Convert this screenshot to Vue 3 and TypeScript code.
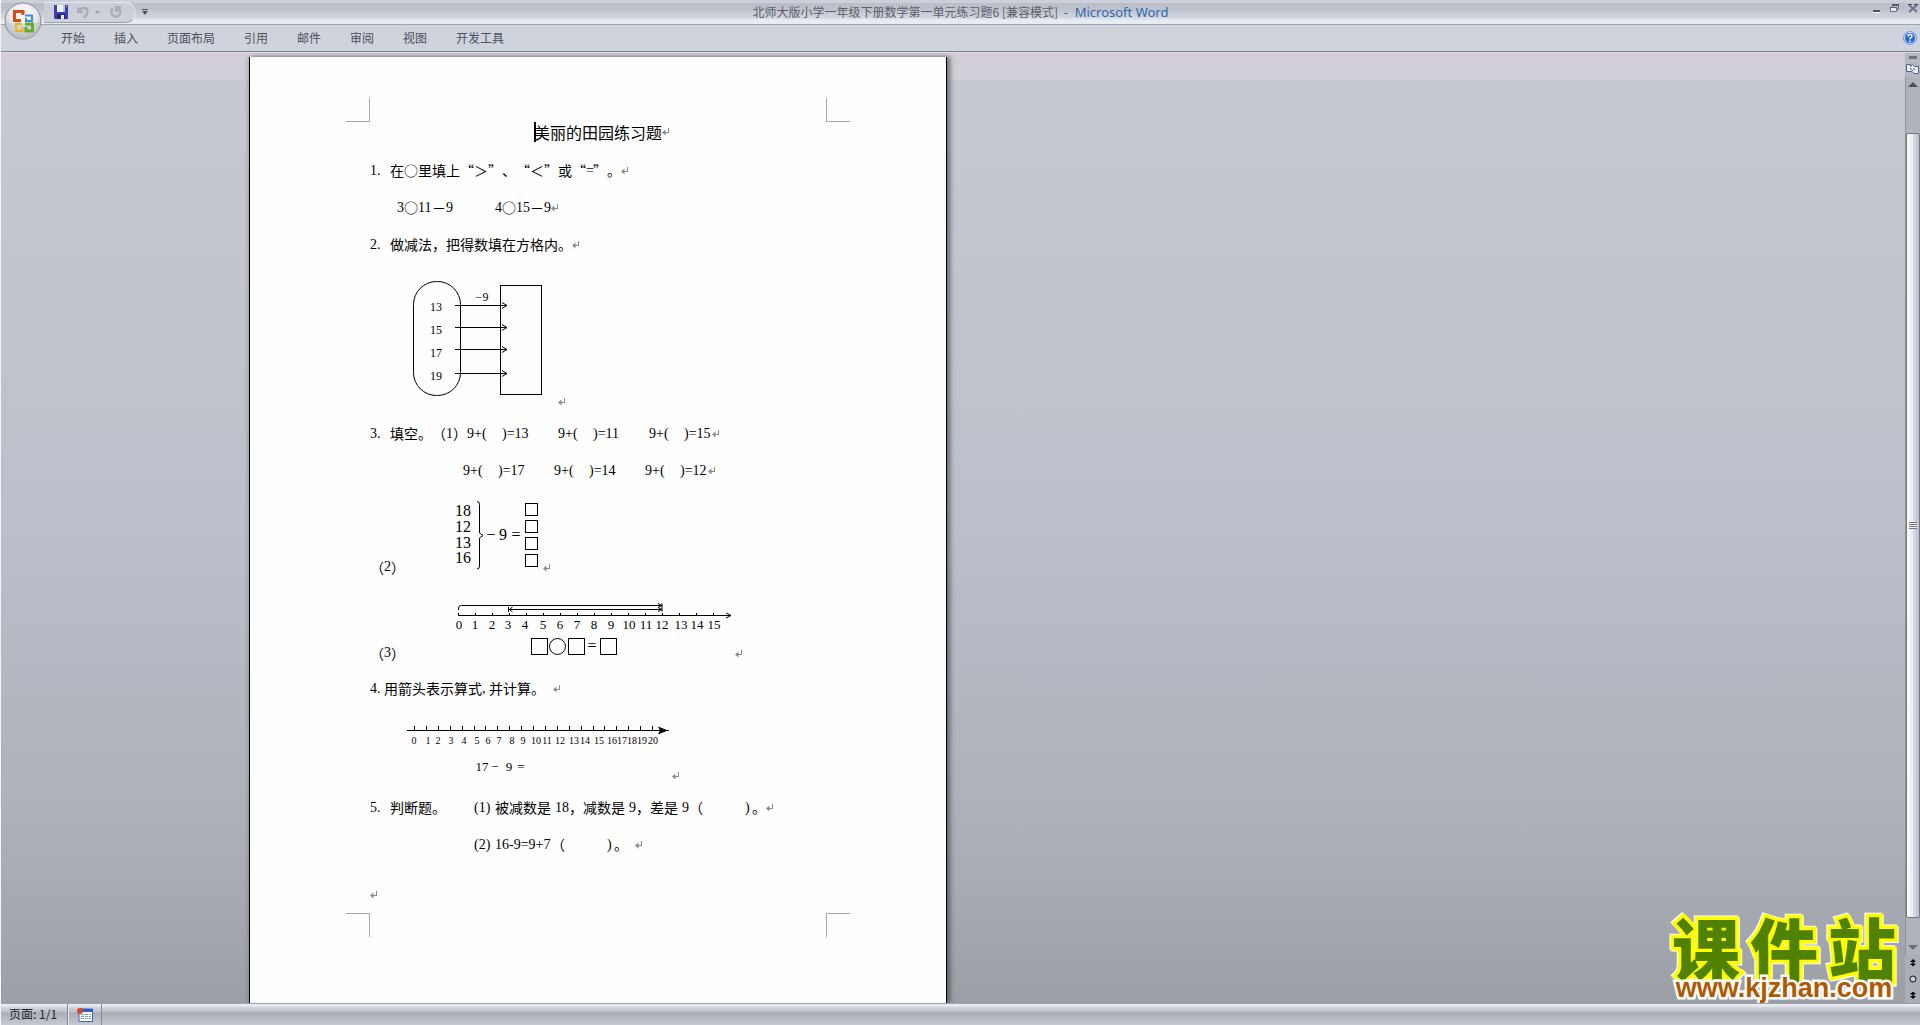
<script setup lang="ts">
import { defineComponent, h } from 'vue'

interface Cell {
  text?: string
  width: number
  latin?: boolean
}

const cjk = (text: string): Cell => ({ text, width: text.length * 14 })
const half = (text: string): Cell => ({ text, width: text.length * 7, latin: true })
const gap = (width: number): Cell => ({ width })
const blank = (result: string): Cell[] => [half('9+('), gap(14), half(')=' + result)]

const tabs = ['开始', '插入', '页面布局', '引用', '邮件', '审阅', '视图', '开发工具']

const compareLines: Cell[][] = [
  [half('1.'), gap(6), cjk('在○里填上“＞”、“＜”或“'), half('='), cjk('”。')],
  [gap(27), half('3'), cjk('○'), half('11'), cjk('－'), half('9'), gap(42), half('4'), cjk('○'), half('15'), cjk('－'), half('9')],
  [half('2.'), gap(6), cjk('做减法，把得数填在方格内。')],
]

const blankLines: Cell[][] = [
  [half('3.'), gap(6), cjk('填空。（'), half('1'), cjk('）'), ...blank('13'), gap(28), ...blank('11'), gap(28), ...blank('15')],
  [gap(93), ...blank('17'), gap(28), ...blank('14'), gap(28), ...blank('12')],
]

const arrowTitle: Cell[] = [half('4.'), cjk('用箭头表示算式'), half(','), cjk('并计算。'), gap(8)]

const judgeLines: Cell[][] = [
  [
    half('5.'), gap(6), cjk('判断题。'), gap(28), half('(1)'), cjk('被减数是'), gap(4), half('18'), cjk('，减数是'), gap(4),
    half('9'), cjk('，差是'), gap(4), half('9'), cjk('（'), gap(42), half(')'), cjk('。'),
  ],
  [gap(104), half('(2)'), half('16-9=9+7'), cjk('（'), gap(42), half(')'), cjk('。'), gap(7)],
]

const mapping = [
  { n: 13, line: 43, base: 49 },
  { n: 15, line: 65, base: 72 },
  { n: 17, line: 87, base: 95 },
  { n: 19, line: 111, base: 118 },
]
const minuends = [
  { n: 18, base: 19 },
  { n: 12, base: 35 },
  { n: 13, base: 51 },
  { n: 16, base: 66 },
]
const answerBoxes = [6, 23, 40, 57]
const shortAxis = [54, 70, 87, 103, 120, 138, 155, 172, 189, 206, 224, 241, 257, 276, 292, 309]
const longAxis = [44, 58, 68, 81, 94, 107, 118, 129, 142, 153, 166, 177, 190, 204, 215, 229, 242, 252, 262, 272, 283]

const ReturnMark = defineComponent(() => () =>
  h('svg', { width: 8, height: 8, viewBox: '0 0 8 8', 'aria-hidden': 'true', style: 'flex:none' }, [
    h('path', { d: 'M6.5 0v4.5H1', fill: 'none', stroke: '#8a8a8a', 'shape-rendering': 'crispEdges' }),
    h('path', { d: 'M0 4.5L3.5 1.5v6z', fill: '#8a8a8a' }),
  ]),
)

const TextLine = defineComponent({
  props: { cells: { type: Array as () => Cell[], required: true } },
  setup(props) {
    return () =>
      h('p', { class: 'line' }, [
        ...props.cells.map((c) =>
          h('span', { class: c.latin ? 'latin' : 'cell', style: { width: c.width + 'px' } }, c.text),
        ),
        h(ReturnMark),
      ])
  },
})
</script>

<template>
  <div class="app">
    <header class="titlebar">
      <div class="quick">
        <button class="tool" aria-label="保存">
          <svg width="14" height="14" viewBox="0 0 14 14">
            <path d="M0 0h14v14H1L0 13z" fill="#3b3fb0" />
            <path d="M3 0h8v7H3z" fill="#eef2fb" />
            <path d="M9 0h2v7H9z" fill="#b9c6e6" />
            <path d="M3 9h8v5H3z" fill="#23276e" />
            <path d="M7 10h3v4H7z" fill="#e8ecf6" />
            <path d="M12 1h1v1h-1z" fill="#c9d1f5" />
          </svg>
        </button>
        <button class="tool undo" aria-label="撤消">
          <svg width="13" height="14" viewBox="0 0 13 14">
            <path d="M2.500 5.500C5 2 10.500 2 10.500 6.500c0 3-2 4.500-3.500 6" fill="none" stroke="#a9adb9" stroke-width="2.500" />
            <path d="M0 1v7h7z" fill="#a9adb9" />
          </svg>
        </button>
        <svg class="drop" width="5" height="3" viewBox="0 0 5 3"><path d="M0 0h5L2.500 3z" fill="#9a9eaa" /></svg>
        <button class="tool redo" aria-label="重复">
          <svg width="13" height="14" viewBox="0 0 13 14">
            <path d="M4 3.500a4.500 4.500 0 1 0 5.500 0" fill="none" stroke="#a9adb9" stroke-width="2.500" />
            <path d="M6 1h6v2H9v4H6z" fill="#a9adb9" />
          </svg>
        </button>
      </div>
      <button class="more" aria-label="自定义快速访问工具栏">
        <svg width="6" height="6" viewBox="0 0 6 6"><path d="M0 0h6v1H0zM0 2h6L3 6z" fill="#4c505a" /></svg>
      </button>
      <h1 class="caption">北师大版小学一年级下册数学第一单元练习题6 [兼容模式] <span class="brand">-&nbsp; Microsoft Word</span></h1>
      <div class="window">
        <button aria-label="最小化">
          <svg width="10" height="10" viewBox="0 0 10 10"><path d="M1 6h7v2H1z" fill="#4a4d57" /><path d="M1 8h7v1H1z" fill="#fff" /></svg>
        </button>
        <button aria-label="还原">
          <svg width="10" height="10" viewBox="0 0 10 10">
            <path d="M2.500 5V1.500h6v4H7" fill="none" stroke="#6c7180" />
            <path d="M2 0h7v2H2zM0 3h7v2H0z" fill="#5a5e6a" />
            <path d="M.5 4v3.500h6V4" fill="#e6e9f0" stroke="#6c7180" />
          </svg>
        </button>
        <button aria-label="关闭">
          <svg width="10" height="10" viewBox="0 0 10 10"><path d="M1 1l8 7M9 1L1 8" stroke="#6c7488" stroke-width="2" /><path d="M0 0h4v1H0zM6 0h4v1H6z" fill="#4a4d57" /></svg>
        </button>
      </div>
    </header>

    <button class="office" aria-label="Office 按钮">
      <svg width="38" height="38" viewBox="0 0 38 38">
        <defs>
          <radialGradient id="orb" cx="50%" cy="30%" r="70%">
            <stop offset="0" stop-color="#fff" />
            <stop offset=".6" stop-color="#e4e5ea" />
            <stop offset="1" stop-color="#a2a5ad" />
          </radialGradient>
        </defs>
        <circle cx="19" cy="19" r="18" fill="url(#orb)" stroke="#888c95" />
        <path d="M2 20a17 17 0 0 0 34 0c-8 3-26 3-34 0z" fill="#c6c8cf" opacity=".6" />
        <g fill="none" stroke-width="3">
          <path d="M17 18.500H10.500V9.500H19V13" stroke="#dd4b12" />
          <path d="M21 13.500h7V19h-6v-3" stroke="#3b8ede" stroke-width="2" />
          <path d="M18 22h-6v7h6.500V25" stroke="#f4b312" stroke-width="2" />
          <path d="M21 22h7.500v7H22V25" stroke="#5fae2e" />
        </g>
      </svg>
    </button>

    <nav class="ribbon">
      <button v-for="t in tabs" :key="t" class="tab">{{ t }}</button>
      <button class="help" aria-label="帮助">
        <svg width="14" height="14" viewBox="0 0 14 14">
          <circle cx="7" cy="7" r="6.500" fill="#2465d8" stroke="#7ba4e4" />
          <circle cx="7" cy="7" r="5.500" fill="none" stroke="#dbe8fc" />
          <path d="M5 5.500C5 3 9 3 9 5.300 9 6.500 7 6.500 7 8.200M7 9.500v1.500" fill="none" stroke="#fff" stroke-width="1.500" />
        </svg>
      </button>
    </nav>

    <main class="work">
      <article class="page">
        <i class="crop tl"></i><i class="crop tr"></i><i class="crop bl"></i><i class="crop br"></i>

        <h2 class="heading"><span class="caret"></span>美丽的田园练习题<ReturnMark /></h2>

        <TextLine v-for="(c, i) in compareLines" :key="'c' + i" :cells="c" />

        <div class="figure map">
          <svg width="188" height="144" viewBox="0 0 188 144">
            <rect class="ink" x="43.500" y="19.500" width="47" height="114" rx="23" />
            <rect class="ink" x="130.500" y="23.500" width="41" height="109" />
            <text x="112" y="39" class="t12">−9</text>
            <g v-for="m in mapping" :key="m.n">
              <text x="66" :y="m.base" class="t12">{{ m.n }}</text>
              <path class="ink" :d="`M85 ${m.line + 0.5}h52m-5 -3l5 3l-5 3`" />
            </g>
          </svg>
          <ReturnMark />
        </div>

        <TextLine v-for="(c, i) in blankLines" :key="'b' + i" :cells="c" />

        <div class="figure brace">
          <span class="label"><span class="cell">（</span><span class="latin">2</span><span class="cell">）</span></span>
          <svg width="138" height="77" viewBox="0 0 138 77">
            <text v-for="m in minuends" :key="m.n" x="58" :y="m.base" class="t16">{{ m.n }}</text>
            <path class="ink" d="M72 4.500q2.500 0 2.500 3V36l3.500 2.500l-3.500 2.500V69q0 3-2.500 3" />
            <text x="86" y="43" class="t16">−</text>
            <text x="98" y="43" class="t16">9</text>
            <text x="111" y="43" class="t16">=</text>
            <rect v-for="y in answerBoxes" :key="y" class="ink" x="120.500" :y="y + 0.5" width="12" height="12" />
          </svg>
          <ReturnMark class="raised" />
        </div>

        <div class="figure jump">
          <span class="label"><span class="cell">（</span><span class="latin">3</span><span class="cell">）</span></span>
          <svg width="330" height="62" viewBox="0 0 330 62">
            <path class="ink" d="M53.500 12v-2q0-2.500 3-2.500H257m0-2v8m-4-8l4 2l-4 2" />
            <path class="ink" d="M103.500 9v5m4-5l-3 2.500l3 2.500M104 11.500h153m-4-2l4 2l-4 2" />
            <path class="ink" d="M53 17.500h273m-5-2.500l5 2.500l-5 2.500" />
            <g v-for="(x, i) in shortAxis" :key="i">
              <path class="ink" :d="`M${53.5 + i * 17} 15v3`" />
              <text :x="x" y="31" class="t13">{{ i }}</text>
            </g>
            <rect class="ink" x="126.500" y="40.500" width="16" height="16" />
            <circle class="ink" cx="152.500" cy="48.500" r="8" />
            <rect class="ink" x="163.500" y="40.500" width="16" height="16" />
            <text x="187" y="53" class="t16">=</text>
            <rect class="ink" x="195.500" y="40.500" width="16" height="16" />
          </svg>
          <ReturnMark class="raised" />
        </div>

        <TextLine :cells="arrowTitle" />

        <div class="figure axis">
          <svg width="302" height="65" viewBox="0 0 302 65">
            <path class="ink" d="M37 15.500h262" />
            <path d="M288 11.500l10 4l-10 4l2-4z" />
            <g v-for="(x, i) in longAxis" :key="i">
              <path class="ink" :d="`M${Math.round(i * 11.9) + 44.5} 11v4`" />
              <text :x="x" y="29" class="t10">{{ i }}</text>
            </g>
            <text x="112" y="56" class="t13">17</text>
            <text x="125" y="56" class="t13">−</text>
            <text x="139" y="56" class="t13">9</text>
            <text x="151" y="56" class="t13">=</text>
          </svg>
          <ReturnMark />
        </div>

        <TextLine v-for="(c, i) in judgeLines" :key="'j' + i" :cells="c" />
        <p class="tail"><ReturnMark /></p>
      </article>

      <a class="site" href="#">
        <span class="name"><span>课</span><span>件</span><span>站</span></span>
        <span class="url">www.kjzhan.com</span>
      </a>

      <aside class="scroll">
        <i class="split"></i>
        <button class="ruler" aria-label="标尺">
          <svg width="13" height="12" viewBox="0 0 13 12"><path d="M.5 1.500h4v2l2-2 2 2h4v7H8l-2-2H.5z" fill="#e8edf6" stroke="#4d6288" /><path d="M4 5l3 3M7 6h2" stroke="#4d6288" /></svg>
        </button>
        <div class="track">
          <button class="arrow" aria-label="向上滚动"><svg width="10" height="5" viewBox="0 0 10 5"><path d="M5 0l5 5H0z" fill="#4c5056" /></svg></button>
          <div class="thumb"><i class="grip"></i></div>
          <button class="arrow" aria-label="向下滚动"><svg width="10" height="5" viewBox="0 0 10 5"><path d="M0 0h10L5 5z" fill="#66707c" /></svg></button>
        </div>
        <div class="browse">
          <button aria-label="前一页"><svg width="6" height="7" viewBox="0 0 6 7"><path d="M3 0l3 3H0zM3 3l3 3H4v1H2V6H0z" /></svg></button>
          <button aria-label="选择浏览对象"><svg width="8" height="8" viewBox="0 0 8 8"><circle cx="4" cy="4" r="3" fill="#c9ccd0" stroke="#111" /></svg></button>
          <button aria-label="下一页"><svg width="6" height="7" viewBox="0 0 6 7"><path d="M3 7l3-3H0zM3 4l3-3H4V0H2v1H0z" /></svg></button>
        </div>
      </aside>
    </main>

    <footer class="status">
      <span class="pages">页面: 1/1</span>
      <button class="macro" aria-label="宏">
        <svg width="16" height="14" viewBox="0 0 16 14">
          <path d="M2 1h13.500v12.500H2z" fill="#fff" stroke="#3c66b4" />
          <path d="M2 1h14v3H2z" fill="#2c5fc4" />
          <path d="M4 6h3v1H4zM8 6h3v1H8zM12 6h2v1h-2zM4 8h3v1H4zM8 8h3v1H8zM12 8h2v1h-2zM4 10h3v1H4zM8 10h3v1H8zM12 10h2v1h-2z" fill="#7f9fd6" />
          <circle cx="3" cy="3" r="3" fill="#d4472a" />
        </svg>
      </button>
    </footer>
  </div>
</template>

<style>
body {
  margin: 0;
}
</style>

<style scoped>
.app {
  position: relative;
  display: flex;
  flex-direction: column;
  height: 100vh;
  box-sizing: border-box;
  border-left: 1px solid #f4f4f8;
  overflow: hidden;
  font-family: 'Noto Sans CJK SC', sans-serif;
  font-size: 12px;
  color: #3f444e;
  text-spacing-trim: space-all;
}
button {
  display: flex;
  align-items: center;
  justify-content: center;
  padding: 0;
  border: 0;
  background: none;
  font: inherit;
  color: inherit;
}
.titlebar {
  display: grid;
  grid-template-columns: 135px 1fr auto 1fr 135px;
  align-items: center;
  flex: none;
  height: 24px;
  border-bottom: 1px solid #9fa3ad;
  background: linear-gradient(#cbcfd8 0 3px, #bbbfc9 3px 6px, #bec2cb 9px, #d0d4dc 17px, #dde1e9 19px, #e7ebf2 20px);
}
.quick {
  display: flex;
  align-items: center;
  box-sizing: border-box;
  width: 92px;
  height: 21px;
  margin-left: 43px;
  padding-left: 10px;
  border: 1px solid #e4e7ee;
  border-left: 0;
  border-bottom-color: #9b9faa;
  border-radius: 0 11px 11px 0;
  background: linear-gradient(#c9cdd6, #ced2db);
}
.undo {
  margin-left: 9px;
}
.drop {
  margin-left: 5px;
}
.redo {
  margin-left: 9px;
}
.more {
  justify-self: start;
  margin-left: 6px;
}
.caption {
  margin: 0;
  font-size: 12px;
  line-height: 20px;
  font-weight: 400;
  color: #5c606a;
  white-space: nowrap;
}
.brand {
  margin-left: 3px;
  font-family: 'Noto Sans', sans-serif;
  font-size: 13px;
  color: #2f68ae;
}
.window {
  grid-column: 5;
  display: flex;
  justify-content: flex-end;
  gap: 8px;
  padding-right: 2px;
  padding-bottom: 7px;
}
.office {
  position: absolute;
  left: 3px;
  top: 2px;
  z-index: 2;
}
.ribbon {
  display: flex;
  align-items: center;
  gap: 29px;
  flex: none;
  height: 26px;
  padding: 0 3px 0 60px;
  border-bottom: 1px solid #7e828b;
  background: #cfd3dc;
  color: #4c515c;
}
.tab {
  line-height: 18px;
}
.help {
  margin-left: auto;
}
.work {
  position: relative;
  display: flex;
  flex: 1;
  min-height: 0;
  overflow: hidden;
  border-top: 1px solid #dcdde3;
  background: linear-gradient(#d1ced8 0 27px, #c7c9d2 27px, #c0c4cd 30%, #bbbfc9 50%, #adb1ba 80%, #a4a7af 92%, #9a9fa6);
}
.page {
  position: relative;
  flex: none;
  box-sizing: border-box;
  width: 698px;
  margin: 4px 0 0 248px;
  padding: 65px 120px 0;
  border: solid #000;
  border-width: 0 1px;
  background: #fefefe;
  box-shadow: 3px 0 5px rgba(40, 44, 52, 0.6), -2px 0 3px rgba(80, 84, 92, 0.2);
  color: #000;
}
.crop {
  position: absolute;
  width: 23px;
  height: 23px;
  border: 0 solid #a5a8ae;
}
.tl {
  left: 96px;
  top: 41px;
  border-width: 0 1px 1px 0;
}
.tr {
  right: 96px;
  top: 41px;
  border-width: 0 0 1px 1px;
}
.bl {
  left: 96px;
  bottom: 66px;
  border-width: 1px 1px 0 0;
}
.br {
  right: 96px;
  bottom: 66px;
  border-width: 1px 0 0 1px;
}
.heading {
  display: flex;
  align-items: center;
  justify-content: center;
  height: 20px;
  margin: 0 0 10px;
  font-size: 16px;
  font-weight: 400;
  line-height: 20px;
}
.heading svg {
  margin-right: -8px;
}
.caret {
  width: 2px;
  height: 20px;
  margin-right: -2px;
  background: #000;
}
.page :deep(.line) {
  display: flex;
  align-items: center;
  height: 37px;
  margin: 0;
  font-size: 14px;
  font-weight: 400;
  line-height: 18px;
  white-space: nowrap;
}
.page :deep(.cell) {
  flex: none;
}
.page :deep(.line .cell) {
  padding-bottom: 2px;
}
.page :deep(.latin) {
  flex: none;
  font-family: 'Liberation Serif', serif;
}
.figure {
  display: flex;
  align-items: flex-end;
  box-sizing: border-box;
}
.raised {
  margin-bottom: 2px;
}
.map {
  height: 152px;
  padding-bottom: 9px;
}
.brace {
  height: 91px;
  padding-bottom: 6px;
}
.jump {
  height: 90px;
  padding-bottom: 10px;
}
.axis {
  height: 82px;
  padding-bottom: 9px;
}
.label {
  display: flex;
  flex: none;
  width: 35px;
  font-size: 14px;
  line-height: 14px;
}
.ink {
  fill: none;
  stroke: #000;
}
text {
  font-family: 'Liberation Serif', serif;
  text-anchor: middle;
}
.t10 {
  font-size: 10px;
}
.t12 {
  font-size: 12px;
}
.t13 {
  font-size: 13px;
}
.t16 {
  font-size: 16px;
}
.tail {
  display: flex;
  align-items: center;
  height: 64px;
  margin: 0;
}
.site {
  position: absolute;
  right: 24px;
  bottom: 4px;
  display: flex;
  flex-direction: column;
  align-items: center;
  text-decoration: none;
  white-space: nowrap;
}
.name {
  display: flex;
  gap: 10px;
  font-size: 68px;
  font-weight: 900;
  line-height: 60px;
  color: #508200;
  -webkit-text-stroke: 7px #ff0;
  paint-order: stroke fill;
  filter: drop-shadow(1px 1px 0 #fff) drop-shadow(-1px -1px 0 #fff);
}
.url {
  position: relative;
  font-family: 'Liberation Sans', sans-serif;
  font-size: 27px;
  font-weight: 700;
  line-height: 22px;
  color: #b05a00;
  -webkit-text-stroke: 5px #fff;
  paint-order: stroke fill;
}
.scroll {
  display: flex;
  flex-direction: column;
  width: 15px;
  margin-left: auto;
  background: #b4b8c0;
}
.split {
  height: 3px;
  margin: 3px 3px 2px 4px;
  background: #6f727a;
}
.ruler {
  height: 16px;
}
.track {
  display: flex;
  flex-direction: column;
  flex: 1;
  box-sizing: border-box;
  border: solid #8e929b;
  border-width: 0 0 0 1px;
  background: #b0b3bc;
}
.arrow {
  height: 15px;
}
.thumb {
  display: flex;
  align-items: center;
  justify-content: center;
  flex: 1;
  margin: 41px 0 22px;
  box-sizing: border-box;
  border: 1px solid #75787f;
  border-radius: 2px;
  background: linear-gradient(90deg, #fdfaf4 0 3px, #ebeef5 3px 6px, #d6d9e3 6px 9px, #c3c7d2 9px);
}
.grip {
  width: 8px;
  height: 7px;
  background: repeating-linear-gradient(#75787f 0 1px, #f2f3f6 1px 2px);
}
.browse {
  display: flex;
  flex-direction: column;
  align-items: center;
  justify-content: space-around;
  height: 48px;
  background: #a9adb5;
}
.status {
  display: flex;
  align-items: stretch;
  flex: none;
  height: 21px;
  border-top: 1px solid #9da1a9;
  background: linear-gradient(#e9ebf0 0 2px, #d5d8e0 3px, #b9bdc7 8px, #a9adb6 9px, #c6cad3 21px);
  color: #22252b;
}
.pages {
  box-sizing: border-box;
  width: 67px;
  padding-left: 8px;
  border-right: 1px solid #868a94;
  line-height: 20px;
}
.macro {
  width: 34px;
  border-left: 1px solid #e4e6ec;
  border-right: 1px solid #868a94;
}
</style>
